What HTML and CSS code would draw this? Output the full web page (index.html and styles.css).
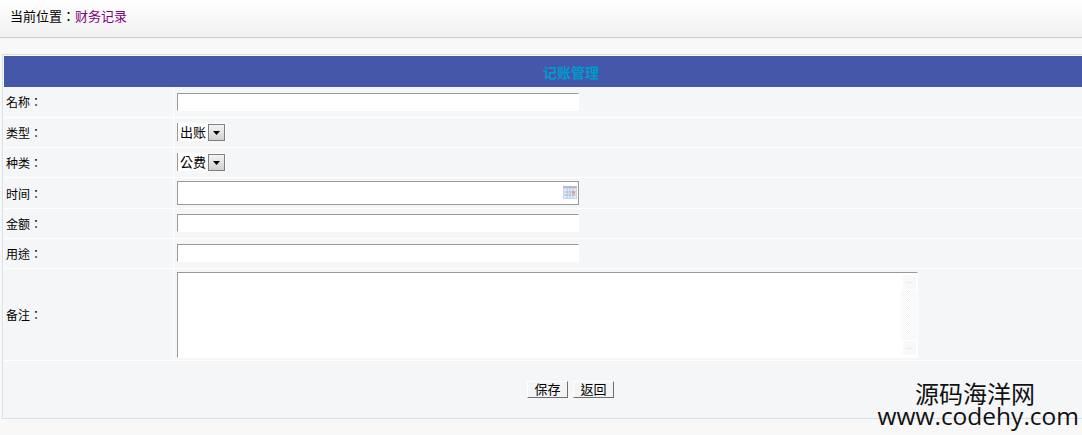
FILE: index.html
```html
<!DOCTYPE html>
<html lang="zh-TW">
<head>
<meta charset="utf-8">
<title>记账管理</title>
<link rel="stylesheet" href="styles.css">
</head>
<body>
<header class="crumbs"><span>当前位置：</span><a class="crumb-link">财务记录</a></header>
<main class="panel">
  <h1 class="panel-title">记账管理</h1>
  <div class="row row-name">
    <div class="label">名称：</div>
    <div class="field"><input class="text" type="text"></div>
  </div>
  <div class="row row-a">
    <div class="label">类型：</div>
    <div class="field">
      <div class="picker"><select class="pick"><option>出账</option></select>
        <span class="arrow"><svg width="7" height="4" viewBox="0 0 7 4"><path d="M0 0h7L3.500 4z" fill="#000"/></svg></span></div>
    </div>
  </div>
  <div class="row row-a">
    <div class="label">种类：</div>
    <div class="field">
      <div class="picker"><select class="pick"><option>公费</option></select>
        <span class="arrow"><svg width="7" height="4" viewBox="0 0 7 4"><path d="M0 0h7L3.500 4z" fill="#000"/></svg></span></div>
    </div>
  </div>
  <div class="row row-c">
    <div class="label">时间：</div>
    <div class="field">
      <div class="date"><input class="date-input" type="text">
        <svg class="cal" width="14" height="13" viewBox="0 0 14 13">
          <rect x="0" y="0" width="14" height="13" fill="#c9d6ea"/>
          <rect x="0" y="0" width="14" height="2" fill="#b4bccb"/>
          <rect x="1" y="3" width="12" height="9" fill="#e6eefa"/>
          <path d="M4 3v9M7 3v9M10 3v9M1 6h12M1 9h12" stroke="#a8bedd" stroke-width="1"/>
          <rect x="9" y="5" width="3" height="3" fill="#ee9a8e"/>
        </svg>
      </div>
    </div>
  </div>
  <div class="row row-a">
    <div class="label">金额：</div>
    <div class="field"><input class="text" type="text"></div>
  </div>
  <div class="row row-a">
    <div class="label">用途：</div>
    <div class="field"><input class="text" type="text"></div>
  </div>
  <div class="row row-note">
    <div class="label">备注：</div>
    <div class="field">
      <div class="note"><textarea class="note-input"></textarea>
        <div class="bar"><span class="bar-btn"></span><span class="bar-track"></span><span class="bar-btn"></span></div>
      </div>
    </div>
  </div>
  <div class="actions">
    <button class="btn" type="button">保存</button>
    <button class="btn" type="button">返回</button>
  </div>
</main>
<div class="watermark"><div class="wm-cn">源码海洋网</div><div class="wm-en">www.codehy.com</div></div>
</body>
</html>
```
FILE: styles.css
```css
* { box-sizing: border-box; }
html, body { margin: 0; padding: 0; }
body {
  width: 1082px;
  height: 435px;
  overflow: hidden;
  position: relative;
  background: #f8f8f8;
  font: 12px "Noto Sans CJK TC", "Liberation Sans", sans-serif;
  color: #000;
}
.crumbs {
  height: 38px;
  padding: 7px 0 0 10px;
  font-size: 13px;
  line-height: 18px;
  background: linear-gradient(#ffffff, #f0f0f0);
  border-bottom: 1px solid #cccccc;
}
.crumb-link { color: #800080; }
.panel {
  margin: 16px 0 0 2px;
  height: 365px;
  border: 1px solid #d3dfe9;
  border-right: 0;
  padding: 1px 0 0 1px;
  background: #fbfcfd;
  display: flex;
  flex-direction: column;
}
.panel-title {
  margin: 0;
  height: 31px;
  padding-left: 56px;
  background: #4457a9;
  color: #0099cc;
  font-size: 14px;
  font-weight: bold;
  line-height: 32px;
  text-align: center;
}
.row {
  display: flex;
  border-bottom: 1px solid #fff;
}
.row-name { height: 31px; }
.row-name .label { padding-bottom: 1px; }
.row-a { height: 30px; }
.row-c { height: 31px; }
.row-note { height: 92px; }
.label {
  width: 170px;
  flex: none;
  padding-left: 2px;
  display: flex;
  align-items: center;
  background: #f5f6f8;
  border-right: 1px solid #fff;
  font-size: 12px;
}
.field {
  flex: 1;
  padding-left: 3px;
  background: #f5f6f8;
}
.row-name .field { padding-top: 6px; }
.row-a .field { padding-top: 5px; }
.row-c .field { padding-top: 3px; }
.row-note .field { padding-top: 3px; }
.text {
  display: block;
  width: 402px;
  height: 18px;
  padding: 0;
  background: #fff;
  border: 1px solid #fff;
  border-top-color: #999;
  border-left-color: #999;
  outline: 0;
}
.picker {
  position: relative;
  width: 49px;
  height: 18px;
  background: #fff;
}
.pick {
  appearance: none;
  display: block;
  width: 49px;
  height: 18px;
  padding: 0 0 0 2px;
  margin: 0;
  border: 0;
  border-left: 1px solid #999;
  border-radius: 0;
  background: transparent;
  font: 13px/18px "Noto Sans CJK TC", sans-serif;
  color: #000;
  outline: 0;
}
.arrow {
  position: absolute;
  left: 31px;
  top: 1px;
  width: 17px;
  height: 17px;
  border: 1px solid #808080;
  background: linear-gradient(#f4f4f4, #cfcfcf);
  display: flex;
  align-items: center;
  justify-content: center;
  pointer-events: none;
}
.date {
  position: relative;
  width: 402px;
  height: 24px;
}
.date-input {
  display: block;
  width: 100%;
  height: 100%;
  padding: 0;
  background: #fff;
  border: 1px solid #999;
  outline: 0;
}
.cal {
  position: absolute;
  right: 2px;
  top: 5px;
}
.note {
  position: relative;
  width: 741px;
  height: 86px;
}
.note-input {
  display: block;
  width: 100%;
  height: 100%;
  padding: 0;
  resize: none;
  overflow: hidden;
  background: #fff;
  border: 1px solid #fff;
  border-top-color: #999;
  border-left-color: #999;
  outline: 0;
}
.bar {
  position: absolute;
  right: 1px;
  top: 1px;
  bottom: 1px;
  width: 16px;
  display: flex;
  flex-direction: column;
  padding: 2px 0;
  background: #fff;
}
.bar-btn {
  display: flex;
  align-items: center;
  justify-content: center;
  height: 14px;
  margin: 0 1px 0 2px;
  background: #f9f9f9;
}
.bar-btn::before {
  content: "";
  width: 7px;
  height: 1px;
  background: #ececec;
}
.bar-track {
  flex: 1;
  margin: 1px 0;
  background: repeating-conic-gradient(#f3f3f3 0 25%, #fff 0 50%) 0 0 / 2px 2px;
}
.actions {
  flex: 1;
  display: flex;
  justify-content: center;
  align-items: flex-start;
  gap: 5px;
  padding-top: 20px;
  padding-left: 55px;
  background: #f5f6f8;
}
.btn {
  width: 41px;
  height: 17px;
  padding: 0 0 2px;
  margin: 0;
  background: #f4f4f4;
  border: 1px solid;
  border-color: #fff #6e6e6e #6e6e6e #fff;
  border-radius: 0;
  font: 13px/13px "Noto Sans CJK TC", sans-serif;
  color: #000;
}
.watermark {
  position: absolute;
  right: 3px;
  top: 379px;
  text-align: right;
  color: #111;
  pointer-events: none;
}
.wm-cn {
  font-size: 24px;
  line-height: 28px;
  padding-right: 44px;
  height: 23px;
}
.wm-en {
  font-family: "Open Sans", sans-serif;
  font-size: 24.5px;
  line-height: 28px;
}
```
